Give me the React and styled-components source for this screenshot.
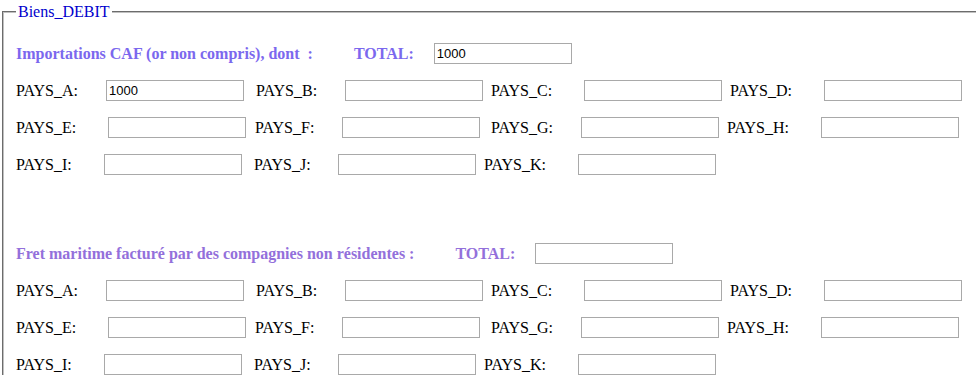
import React from 'react';
import styled, { createGlobalStyle } from 'styled-components';

const GlobalStyle = createGlobalStyle`
  html, body {
    margin: 0;
    padding: 0;
    background: #fff;
    overflow: hidden;
  }
  body {
    font-family: "Liberation Serif", "Times New Roman", serif;
    font-size: 16px;
    color: #000;
  }
`;

const sections = [
    {
        title: 'Importations CAF (or non compris), dont  :',
        color: '#7b68ee',
        totalGap: 41,
        total: '1000',
        top: 22,
        rows: [
            [
                { name: 'PAYS_A', w: 90, ml: 0, value: '1000' },
                { name: 'PAYS_B', w: 89, ml: 12 },
                { name: 'PAYS_C', w: 93, ml: 8 },
                { name: 'PAYS_D', w: 94, ml: 8 },
            ],
            [
                { name: 'PAYS_E', w: 92, ml: 0 },
                { name: 'PAYS_F', w: 87, ml: 9 },
                { name: 'PAYS_G', w: 90, ml: 11 },
                { name: 'PAYS_H', w: 94, ml: 8 },
            ],
            [
                { name: 'PAYS_I', w: 88, ml: 0 },
                { name: 'PAYS_J', w: 84, ml: 12 },
                { name: 'PAYS_K', w: 94, ml: 8 },
            ],
        ],
    },
    {
        title: 'Fret maritime facturé par des compagnies non résidentes :',
        color: '#9370db',
        totalGap: 41,
        total: '',
        top: 68,
        rows: [
            [
                { name: 'PAYS_A', w: 90, ml: 0 },
                { name: 'PAYS_B', w: 89, ml: 12 },
                { name: 'PAYS_C', w: 93, ml: 8 },
                { name: 'PAYS_D', w: 94, ml: 8 },
            ],
            [
                { name: 'PAYS_E', w: 92, ml: 0 },
                { name: 'PAYS_F', w: 87, ml: 9 },
                { name: 'PAYS_G', w: 90, ml: 11 },
                { name: 'PAYS_H', w: 94, ml: 8 },
            ],
            [
                { name: 'PAYS_I', w: 88, ml: 0 },
                { name: 'PAYS_J', w: 84, ml: 12 },
                { name: 'PAYS_K', w: 94, ml: 8 },
            ],
        ],
    },
];

function App() {
    return (
        <>
            <GlobalStyle />
            <Page>
                <Fieldset>
                    <Legend>Biens_DEBIT</Legend>
                    {sections.map((s, i) => (
                        <Section key={i} $top={s.top}>
                            <HeadRow>
                                <Heading $color={s.color}>{s.title}</Heading>
                                <Heading $color={s.color} $ml={s.totalGap}>TOTAL:</Heading>
                                <Field $ml={20} defaultValue={s.total} />
                            </HeadRow>
                            {s.rows.map((row, j) => (
                                <Row key={j}>
                                    {row.map((f) => (
                                        <Cell key={f.name} $ml={f.ml}>
                                            <Label $w={f.w}>{f.name}:</Label>
                                            <Field defaultValue={f.value || ''} />
                                        </Cell>
                                    ))}
                                </Row>
                            ))}
                        </Section>
                    ))}
                </Fieldset>
            </Page>
        </>
    );
}

const Page = styled.div`
  width: 976px;
  height: 375px;
  overflow: hidden;
`;

const Fieldset = styled.fieldset`
  width: 1000px;
  margin: 3px 2px 0;
  padding: 0 12px 10px;
  border: 2px groove #c0c0c0;
  min-inline-size: 0;
`;

const Legend = styled.legend`
  color: #0000cd;
  font-size: 16px;
  line-height: 18px;
  padding: 0 2px;
`;

const Section = styled.div`
  display: flex;
  flex-direction: column;
  gap: 16px;
  padding-top: ${(p) => p.$top}px;
`;

const HeadRow = styled.div`
  display: flex;
  align-items: center;
  height: 21px;
`;

const Heading = styled.span`
  color: ${(p) => p.$color};
  font-weight: bold;
  font-size: 16px;
  white-space: pre;
  margin-left: ${(p) => p.$ml || 0}px;
`;

const Row = styled.div`
  display: flex;
  align-items: center;
  height: 21px;
`;

const Cell = styled.div`
  display: flex;
  align-items: center;
  margin-left: ${(p) => p.$ml}px;
`;

const Label = styled.span`
  width: ${(p) => p.$w}px;
  font-size: 16px;
  white-space: nowrap;
`;

const Field = styled.input`
  box-sizing: border-box;
  width: 138px;
  height: 21px;
  margin: 0 0 0 ${(p) => p.$ml || 0}px;
  padding: 1px 2px;
  border: 1px solid #a9a9a9;
  font-family: "Liberation Sans", Arial, sans-serif;
  font-size: 13px;
  color: #000;
  background: #fff;
  outline: none;
`;

export default App;
